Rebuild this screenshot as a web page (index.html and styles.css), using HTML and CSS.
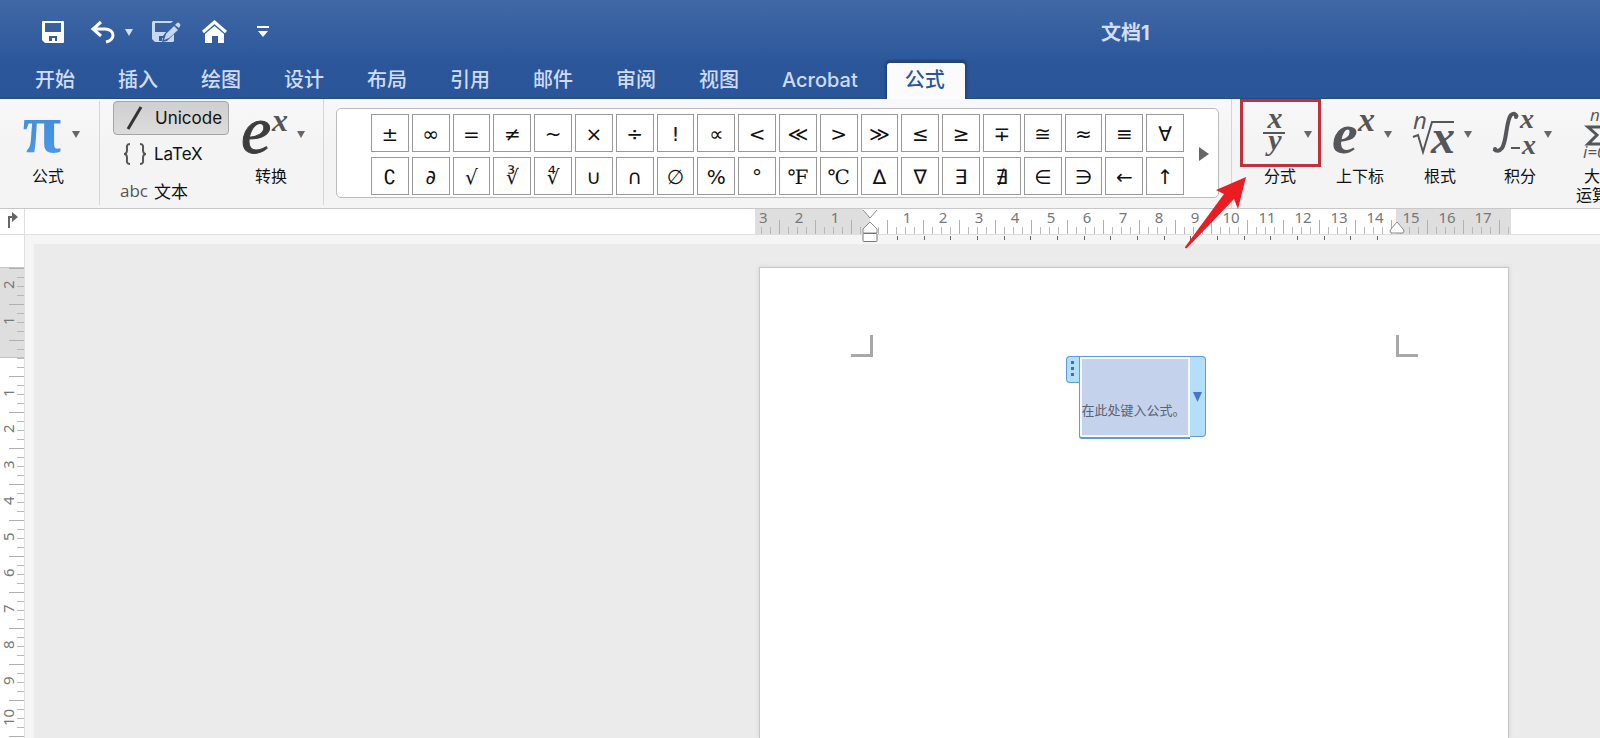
FILE: index.html
```html
<!DOCTYPE html>
<html lang="zh-CN">
<head>
  <meta charset="utf-8">
  <title>文档1</title>
  <link rel="stylesheet" href="styles.css">
</head>
<body>

  <header class="titlebar">
    <div class="top-row">
      <div class="quick">
        <button aria-label="保存">
          <svg width="22" height="22" viewBox="0 0 22 22"><path fill="#fff" fill-rule="evenodd" d="M1 0h20a1 1 0 0 1 1 1v20a1 1 0 0 1-1 1H3l-3-3V1a1 1 0 0 1 1-1zM3 2v9h16V2zM7 15v5h3v-3h3v3h2v-5z"/></svg>
        </button>
        <button aria-label="撤消">
          <svg width="42" height="24" viewBox="0 0 42 24"><path d="M10 2L2 9l8 7M3 9h11c5 0 8 3 8 6 0 4-3 6-7 7" fill="none" stroke="#fff" stroke-width="3"/><path d="M34 9h8l-4 7z" fill="#d5dff0"/></svg>
        </button>
        <button aria-label="另存为">
          <svg width="28" height="22" viewBox="0 0 28 22"><path fill="#c9d8f2" fill-rule="evenodd" d="M1 0h20l-2 2H3v9h11l-3 4H7v5h3v-3h1l-1 4 5-1 7-7v7l-1 1H3l-3-3V1z"/><path fill="#c9d8f2" d="M12 19l2-6 8-8 4 4-9 8zM23 4l2-2q1-1 2 0l1 1q1 1 0 2l-1 2z"/></svg>
        </button>
        <button aria-label="主页">
          <svg width="25" height="24" viewBox="0 0 25 24"><path d="M1 12L12.500 2 24 12" fill="none" stroke="#fff" stroke-width="3"/><path fill="#fff" d="M3 14l9.500-8L22 14v9h-6v-7h-6v7H3z"/></svg>
        </button>
        <button aria-label="自定义快速访问工具栏">
          <svg width="12" height="12" viewBox="0 0 12 12"><path fill="#fff" d="M0 0h12v2H0zM1 5h10l-5 6z"/></svg>
        </button>
      </div>
      <h1>文档1</h1>
    </div>
    <nav class="tabs">
      <a href="#">开始</a>
      <a href="#">插入</a>
      <a href="#">绘图</a>
      <a href="#">设计</a>
      <a href="#">布局</a>
      <a href="#">引用</a>
      <a href="#">邮件</a>
      <a href="#">审阅</a>
      <a href="#">视图</a>
      <a href="#">Acrobat</a>
      <a href="#" class="active">公式</a>
    </nav>
  </header>

  <section class="ribbon">
    <button class="tool formula">
      <svg width="96" height="67" viewBox="0 0 96 67">
        <defs><linearGradient id="blue" x2="0" y2="1"><stop offset="0" stop-color="#3f86d4"/><stop offset="1" stop-color="#4c9bec"/></linearGradient></defs>
        <text x="42" y="52" text-anchor="middle" class="pi" fill="url(#blue)">π</text>
        <path class="caret" d="M72 31h8l-4 7z"/>
      </svg>
      <span>公式</span>
    </button>

    <div class="modes">
      <button class="mode on"><svg width="28" height="26" viewBox="0 0 28 26"><path d="M7 24L20 2" stroke="#333" stroke-width="3"/></svg>Unicode</button>
      <button class="mode"><svg width="28" height="26" viewBox="0 0 28 26"><path d="M10 3C6 3 7 6 7 9s-1 4-3 4c2 0 3 1 3 4s-1 6 3 6M20 3c4 0 3 3 3 6s1 4 3 4c-2 0-3 1-3 4s1 6-3 6" fill="none" stroke="#555" stroke-width="2"/></svg>LaTeX</button>
      <button class="mode"><i>abc</i>文本</button>
    </div>

    <button class="tool convert">
      <svg width="88" height="67" viewBox="0 0 88 67">
        <text x="14" y="53" class="big-e">e</text>
        <text x="45" y="31" class="sup">x</text>
        <path class="caret" d="M70 31h8l-4 7z"/>
      </svg>
      <span>转换</span>
    </button>

    <div class="symbols">
      <div class="grid">
        <button>±</button><button>∞</button><button>=</button><button>≠</button><button>~</button>
        <button>×</button><button>÷</button><button>!</button><button>∝</button><button>&lt;</button>
        <button>≪</button><button>&gt;</button><button>≫</button><button>≤</button><button>≥</button>
        <button>∓</button><button>≅</button><button>≈</button><button>≡</button><button>∀</button>
        <button>∁</button><button>∂</button><button>√</button><button>∛</button><button>∜</button>
        <button>∪</button><button>∩</button><button>∅</button><button>%</button><button>°</button>
        <button class="serif">℉</button><button class="serif">℃</button><button>∆</button><button>∇</button><button>∃</button>
        <button>∄</button><button>∈</button><button>∋</button><button>←</button><button>↑</button>
      </div>
      <button class="more" aria-label="更多符号"><svg width="10" height="14" viewBox="0 0 10 14"><path d="M0 0l10 7-10 7z" fill="#666"/></svg></button>
    </div>

    <div class="structures">
      <button class="tool">
        <svg width="80" height="67" viewBox="0 0 80 67">
          <text x="35" y="28" text-anchor="middle" class="var part">x</text>
          <path d="M23 33h22" stroke="#55565a" stroke-width="2"/>
          <text x="35" y="50" text-anchor="middle" class="var part">y</text>
          <path class="caret" d="M64 31h8l-4 7z"/>
        </svg>
        <span>分式</span>
        <svg class="callout" width="142" height="156" viewBox="0 0 142 156"><path d="M61.500 2.500h78v65h-78z" fill="none" stroke="#c1303d" stroke-width="3"/><path d="M66 79L36 92l8 4L5 149q0 2 2 1l47-49 4 10z" fill="#ea1c24"/></svg>
      </button>
      <button class="tool">
        <svg width="80" height="67" viewBox="0 0 80 67">
          <text x="12" y="53" class="var e">e</text>
          <text x="38" y="31" class="var">x</text>
          <path class="caret" d="M64 31h8l-4 7z"/>
        </svg>
        <span>上下标</span>
      </button>
      <button class="tool">
        <svg width="80" height="67" viewBox="0 0 80 67">
          <text x="13" y="29" class="idx">n</text>
          <path d="M13 37l5-2 5 17 9-30h22" fill="none" stroke="#55565a" stroke-width="2"/>
          <text x="31" y="53" class="var root">x</text>
          <path class="caret" d="M64 31h8l-4 7z"/>
        </svg>
        <span>根式</span>
      </button>
      <button class="tool">
        <svg width="80" height="67" viewBox="0 0 80 67">
          <path d="M37 17q-2-5-6-2c-5 5-4 26-9 33q-4 5-8 1" fill="none" stroke="#55565a" stroke-width="4"/>
          <circle cx="36" cy="17" r="2" fill="#55565a"/><circle cx="15" cy="49" r="2" fill="#55565a"/>
          <text x="40" y="28" class="var small">x</text>
          <path d="M31 48h9" stroke="#55565a" stroke-width="2"/>
          <text x="42" y="54" class="var small">x</text>
          <path class="caret" d="M64 31h8l-4 7z"/>
        </svg>
        <span>积分</span>
      </button>
      <button class="tool">
        <svg width="80" height="67" viewBox="0 0 80 67">
          <text x="30" y="21" class="idx low">n</text>
          <path d="M48 31v-4H28l9 8-9 9h20v-4" fill="none" stroke="#55565a" stroke-width="3"/>
          <text x="23" y="58" class="idx low">i=0</text>
        </svg>
        <span>大型<br>运算符</span>
      </button>
    </div>
  </section>

  <div class="ruler">
    <button class="corner" aria-label="制表符"><svg width="12" height="16" viewBox="0 0 12 16"><path d="M3 16V5h4" fill="none" stroke="#666" stroke-width="2"/><path d="M6 0l6 5-6 5z" fill="#666"/></svg></button>
    <div class="h-track">
      <span>3</span><span>2</span><span>1</span><span></span><span>1</span><span>2</span><span>3</span><span>4</span><span>5</span><span>6</span><span>7</span><span>8</span><span>9</span><span>10</span><span>11</span><span>12</span><span>13</span><span>14</span><span>15</span><span>16</span><span>17</span>
      <svg class="indent left" width="16" height="34" viewBox="0 0 16 34"><path d="M1 0h14v2L8 9 1 2z" fill="#fff"/><path d="M1 1l7 8 7-8" fill="none" stroke="#888"/><path d="M1 24v-4l7-7 7 7v4z" fill="#fff" stroke="#888"/><rect x="1" y="24.500" width="14" height="8" rx="1" fill="#fff" stroke="#777"/></svg>
      <svg class="indent right" width="16" height="34" viewBox="0 0 16 34"><path d="M2 24q-2-2 0-4l6-7 6 7q2 2 0 4z" fill="#fff" stroke="#888"/></svg>
    </div>
  </div>

  <main class="editor">
    <div class="v-ruler">
      <div class="v-track">
        <span>2</span><span>1</span><span></span><span>1</span><span>2</span><span>3</span><span>4</span><span>5</span><span>6</span><span>7</span><span>8</span><span>9</span><span>10</span><span></span>
      </div>
    </div>
    <div class="pane">
      <div class="tab-stops">
        <i></i><i></i><i></i><i></i><i></i><i></i><i></i><i></i><i></i><i></i><i></i><i></i><i></i><i></i><i></i><i></i><i></i><i></i><i></i>
      </div>
      <div class="canvas">
        <article class="page">
          <b class="mark tl"></b>
          <div class="equation">
            <button class="grip" aria-label="移动公式"><i></i><i></i><i></i></button>
            <div class="field">在此处键入公式。</div>
            <button class="options" aria-label="公式选项"><svg width="9" height="10" viewBox="0 0 9 10"><path d="M0 0h9L4.500 10z" fill="#4676c8"/></svg></button>
          </div>
          <b class="mark tr"></b>
        </article>
      </div>
    </div>
  </main>

</body>
</html>
```

FILE: styles.css
```css
* { box-sizing: border-box; }
body {
  margin: 0;
  height: 100vh;
  display: flex;
  flex-direction: column;
  overflow: hidden;
  background: #ebebeb;
  font-family: Inter, "Noto Sans CJK SC", sans-serif;
  font-size: 16px;
  color: #111;
}
button {
  margin: 0;
  padding: 0;
  border: 0;
  background: none;
  font: inherit;
  color: inherit;
}
svg { display: block; overflow: visible; }

/* title bar */
.titlebar {
  flex: none;
  background: linear-gradient(#4068a6, #2b579a 65%, #2a5599);
  border-bottom: 1px solid #24497f;
}
.top-row {
  display: flex;
  align-items: center;
  height: 63px;
}
.quick {
  flex: 0 0 1101px;
  display: flex;
  align-items: center;
  padding-left: 42px;
}
.quick button { margin-right: 27px; }
.quick button:nth-child(2) { margin-right: 19px; }
.quick button:nth-child(3) { margin-right: 22px; }
.quick button:nth-child(4) { margin-right: 30px; }
h1 {
  margin: 0;
  font-size: 20px;
  font-weight: 700;
  color: #d3def3;
}
.tabs {
  display: flex;
  height: 35px;
  padding-left: 35px;
  gap: 43px;
}
.tabs a {
  font-size: 20px;
  font-weight: 500;
  line-height: 34px;
  color: #d0dcf5;
  text-decoration: none;
}
.tabs .active {
  position: relative;
  height: 36px;
  margin-left: -14px;
  padding: 0 20px 0 18px;
  background: #fbfbfb;
  border-radius: 3px 3px 0 0;
  box-shadow: 0 -1px 2px 2px #22457a;
  clip-path: inset(-5px -5px 0 -5px);
  color: #2b579a;
}

/* ribbon */
.ribbon {
  flex: none;
  display: flex;
  height: 110px;
  background: linear-gradient(#f8f8fa, #f4f4f4 40%);
  border-bottom: 1px solid #c8c8c8;
}
.tool {
  flex: none;
  position: relative;
  display: flex;
  flex-direction: column;
  align-items: center;
  width: 80px;
  padding-top: 1px;
  line-height: 19px;
}
.caret { fill: #666; }
.formula { width: 96px; }
.convert {
  width: 97px;
  padding-right: 8px;
  border-right: 1px solid #d5d5d5;
  margin: 0 0 3px;
}
.pi { font: bold 70px "Liberation Serif", serif; }
.big-e {
  font: italic 68px "Liberation Serif", serif;
  fill: #3d3d3d;
  stroke: #3d3d3d;
}
.sup { font: italic bold 32px "Liberation Serif", serif; fill: #555; }
.var { font: italic bold 34px "Liberation Serif", serif; fill: #55565a; }
.var.e { font-size: 58px; }
.var.root { font-size: 48px; }
.var.small { font-size: 28px; }
.var.part { font-size: 30px; }
.idx { font: italic 24px "Open Sans", sans-serif; fill: #55565a; }
.idx.low { font-size: 17px; }

.modes {
  flex: none;
  width: 128px;
  margin: 2px 0 3px 3px;
  padding-left: 13px;
  border-left: 1px solid #d5d5d5;
  font-size: 17px;
}
.mode {
  display: flex;
  align-items: center;
  gap: 6px;
  width: 116px;
  height: 34px;
  margin-bottom: 2px;
  padding-left: 7px;
  border-radius: 4px;
  white-space: nowrap;
}
.mode svg { width: 28px; }
.mode i {
  width: 28px;
  font: 17px "Open Sans", sans-serif;
  color: #555;
}
.mode.on {
  background: linear-gradient(#cfcfcf, #dcdcdc);
  border: 1px solid #a5a5a5;
}

.symbols {
  flex: none;
  display: flex;
  width: 883px;
  margin: 9px 0 10px 12px;
  padding: 5px 0 4px 34px;
  background: #fff;
  border: 1px solid #bcbcbc;
  border-radius: 5px;
}
.grid {
  flex: none;
  display: grid;
  grid-template-columns: repeat(20, 1fr);
  grid-template-rows: 38px 38px;
  gap: 5px 3px;
  width: 813px;
}
.grid button {
  padding-top: 2px;
  border: 1px solid #999;
  background: #fff;
  font: 20px/34px "DejaVu Sans", sans-serif;
  color: #111;
}
.grid .serif { font-family: "DejaVu Serif", serif; }
.more { margin-left: 15px; }
.structures {
  flex: 1;
  display: flex;
  min-width: 0;
  margin-left: 12px;
  padding-left: 8px;
  border-left: 1px solid #d5d5d5;
}
.callout {
  position: absolute;
  left: -60px;
  top: -1px;
  z-index: 5;
}

/* rulers */
.ruler {
  flex: none;
  display: flex;
  height: 26px;
  background: #fff;
  border-bottom: 1px solid #dedede;
}
.corner {
  width: 25px;
  padding: 0 0 3px 6px;
  border-right: 1px solid #dedede;
}
.h-track {
  position: relative;
  display: flex;
  width: 756px;
  margin-left: 730px;
  background:
    linear-gradient(90deg, #b0b0b0 1px, transparent 1px) 24px 100% / 36px 14px repeat-x,
    linear-gradient(90deg, #b8b8b8 1px, transparent 1px) 6px 100% / 9px 7px repeat-x,
    linear-gradient(90deg, #dedede 115px, #fff 115px, #fff 641px, #dedede 641px);
}
.h-track span {
  flex: none;
  width: 36px;
  text-align: center;
}
.h-track span:first-child {
  width: 26px;
  padding-left: 4px;
  text-align: left;
}
.h-track span, .v-track span {
  font: 15px/16px "Noto Sans", sans-serif;
  color: #777;
}
.indent { position: absolute; top: 0; z-index: 2; }
.indent.left { left: 107px; }
.indent.right { left: 634px; }

.editor {
  flex: 1;
  display: flex;
  min-height: 0;
}
.v-ruler {
  flex: none;
  width: 25px;
  padding-top: 32px;
  background: #fff;
  border-right: 1px solid #dedede;
}
.v-track {
  background:
    linear-gradient(#b0b0b0 1px, transparent 1px) 100% 1px / 15px 36px repeat-y,
    linear-gradient(#b8b8b8 1px, transparent 1px) 100% 1px / 7px 9px repeat-y,
    linear-gradient(#c4c4c4 1px, #dedede 1px, #dedede 90px, #c4c4c4 90px, #c4c4c4 91px, #fff 91px);
}
.v-track span {
  display: block;
  width: 16px;
  height: 36px;
  writing-mode: vertical-rl;
  transform: rotate(180deg);
  text-align: center;
}
.pane {
  flex: 1;
  display: flex;
  flex-direction: column;
  min-width: 0;
  padding-left: 9px;
  background: #f5f5f5;
}
.tab-stops {
  flex: none;
  display: flex;
  justify-content: space-between;
  width: 481px;
  height: 9px;
  margin-left: 863px;
  padding-top: 1px;
}
.tab-stops i {
  width: 1px;
  height: 4px;
  background: #666;
}

/* document */
.canvas {
  flex: 1;
  display: flex;
  padding: 23px 0 0 725px;
  background: #ebebeb;
}
.page {
  flex: none;
  display: flex;
  align-items: flex-start;
  justify-content: space-between;
  width: 750px;
  padding: 67px 90px 0 91px;
  background: #fff;
  border: 1px solid #c6c6c6;
  border-bottom: 0;
  box-shadow: 0 0 4px #d0d0d0;
}
.mark {
  width: 22px;
  height: 22px;
  border: 0 solid #a8a8a8;
  border-bottom-width: 3px;
}
.tl { border-right-width: 3px; }
.tr { border-left-width: 3px; }
.equation {
  display: flex;
  align-items: flex-start;
  margin: 21px 0 0 2px;
}
.grip {
  display: flex;
  flex-direction: column;
  align-items: center;
  gap: 3px;
  width: 13px;
  height: 27px;
  padding-top: 4px;
  background: #b3dffa;
  border: 1px solid #5e9bd8;
  border-right: 0;
  border-radius: 4px 0 0 4px;
}
.grip i {
  width: 3px;
  height: 3px;
  background: #44709a;
}
.field {
  width: 111px;
  height: 83px;
  padding: 43px 0 0 2px;
  background: #c5d2ec;
  border: 1px solid #5e9bd8;
  border-bottom-width: 2px;
  border-right: 0;
  border-radius: 0 0 0 3px;
  box-shadow: inset 0 0 0 2px #f4f8ff;
  font-size: 13px;
  line-height: 20px;
  white-space: nowrap;
  color: #5c6270;
}
.options {
  display: flex;
  align-items: center;
  justify-content: center;
  width: 16px;
  height: 81px;
  background: #b3dffa;
  border: 1px solid #5e9bd8;
  border-left: 0;
  border-radius: 0 4px 4px 0;
}
```
